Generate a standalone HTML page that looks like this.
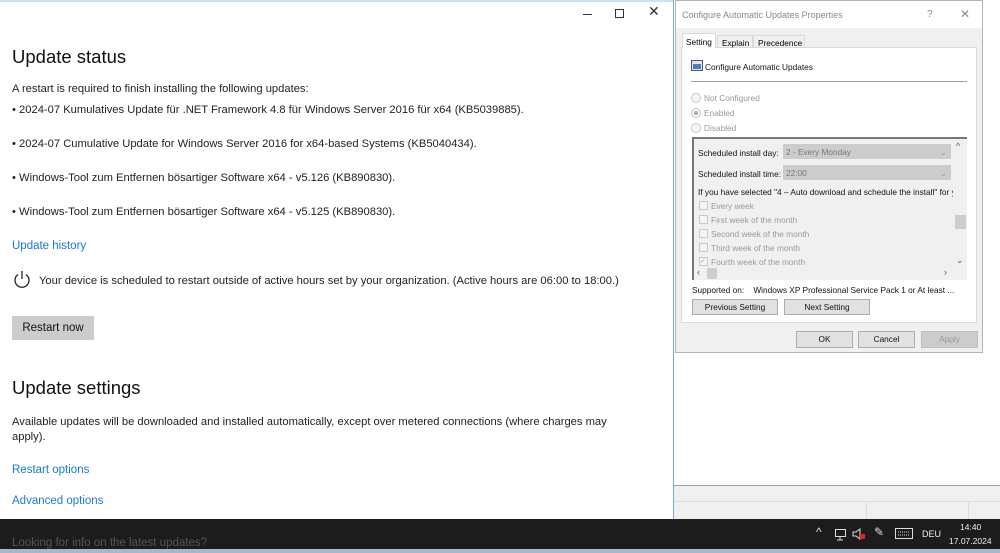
<!DOCTYPE html>
<html><head><meta charset="utf-8"><style>
*{margin:0;padding:0;box-sizing:border-box}
body{width:1000px;height:553px;overflow:hidden;background:#fff;position:relative;font-family:"Liberation Sans",sans-serif}
.a{position:absolute;white-space:nowrap}
.l{color:#222;font-size:11.2px}
.h{color:#111;font-size:18.5px;font-weight:normal}
.lk{color:#1a79d6;font-size:11.5px}
.d{font-size:8.3px;color:#111}
.g{color:#999}
.btn{position:absolute;background:#e1e1e1;border:1px solid #adadad;font-size:8.3px;text-align:center;color:#111}
.cb{position:absolute;width:9px;height:9px;border:1px solid #c8c8c8;background:#f4f4f4}
.rd{position:absolute;width:10px;height:10px;border:1px solid #c8c8c8;border-radius:50%;background:#f4f4f4}
</style></head><body>
<!-- top strip -->
<div class="a" style="left:0;top:0;width:673px;height:2px;background:#cfe0f0"></div>
<div class="a" style="left:673px;top:0;width:1px;height:519px;background:#7aa7d6"></div>
<!-- window controls -->
<div class="a" style="left:583px;top:14px;width:9px;height:1px;background:#333"></div>
<div class="a" style="left:615px;top:9px;width:9px;height:9px;border:1px solid #333"></div>
<div class="a" style="left:648px;top:3px;font-size:14px;color:#333">✕</div>

<div class="a h" style="left:12px;top:46px">Update status</div>
<div class="a l" style="left:12px;top:83px">A restart is required to finish installing the following updates:</div>
<div class="a l" style="left:12px;top:104px">• 2024-07 Kumulatives Update für .NET Framework 4.8 für Windows Server 2016 für x64 (KB5039885).</div>
<div class="a l" style="left:12px;top:138px">• 2024-07 Cumulative Update for Windows Server 2016 for x64-based Systems (KB5040434).</div>
<div class="a l" style="left:12px;top:172px">• Windows-Tool zum Entfernen bösartiger Software x64 - v5.126 (KB890830).</div>
<div class="a l" style="left:12px;top:206px">• Windows-Tool zum Entfernen bösartiger Software x64 - v5.125 (KB890830).</div>
<div class="a lk" style="left:12px;top:240px">Update history</div>
<svg class="a" style="left:12px;top:270px" width="20" height="20" viewBox="0 0 20 20"><path d="M6 4.5A7 7 0 1 0 14 4.5" fill="none" stroke="#222" stroke-width="1.3"/><path d="M10 1v8" stroke="#222" stroke-width="1.3"/></svg>
<div class="a l" style="left:39px;top:275px">Your device is scheduled to restart outside of active hours set by your organization. (Active hours are 06:00 to 18:00.)</div>
<div class="a" style="left:12px;top:316px;width:82px;height:24px;background:#ccc;font-size:11.5px;color:#111;text-align:center;line-height:24px">Restart now</div>

<div class="a h" style="left:12px;top:377px">Update settings</div>
<div class="a l" style="left:12px;top:416px">Available updates will be downloaded and installed automatically, except over metered connections (where charges may</div>
<div class="a l" style="left:12px;top:431px">apply).</div>
<div class="a lk" style="left:12px;top:464px">Restart options</div>
<div class="a lk" style="left:12px;top:495px">Advanced options</div>

<!-- dialog -->
<div class="a" style="left:675px;top:0;width:308px;height:353px;background:#f0f0f0;border:1px solid #b4b4b4">
 <div class="a" style="left:0;top:0;width:306px;height:27px;background:#fff"></div>
 <div class="a" style="left:6px;top:9px;font-size:9px;color:#888">Configure Automatic Updates Properties</div>
 <div class="a" style="left:251px;top:8px;font-size:10px;color:#888">?</div>
 <div class="a" style="left:284px;top:6px;font-size:12px;color:#888">✕</div>
 <!-- tab panel -->
 <div class="a" style="left:5px;top:46px;width:296px;height:276px;background:#fff;border:1px solid #d9d9d9"></div>
 <div class="a" style="left:6px;top:32px;width:34px;height:15px;background:#fff;border:1px solid #d9d9d9;border-bottom:none;font-size:8.3px;padding:3px 0 0 3px">Setting</div>
 <div class="a" style="left:41px;top:34px;width:36px;height:13px;border:1px solid #d9d9d9;font-size:8.3px;padding:2px 0 0 4px">Explain</div>
 <div class="a" style="left:77px;top:34px;width:52px;height:13px;border:1px solid #d9d9d9;font-size:8.3px;padding:2px 0 0 4px">Precedence</div>
 <svg class="a" style="left:15px;top:59px" width="12" height="11"><rect x="0.5" y="0.5" width="11" height="10" fill="#dde6f0" stroke="#556"/><rect x="2" y="4" width="8" height="5" fill="#4a7fc0"/></svg>
 <div class="a d" style="left:29px;top:61px">Configure Automatic Updates</div>
 <div class="a" style="left:15px;top:80px;width:276px;height:1px;background:#a0a0a0"></div>
 <div class="rd" style="left:15px;top:92px"></div><div class="a d g" style="left:28px;top:92px">Not Configured</div>
 <div class="rd" style="left:15px;top:107px"><div style="width:4px;height:4px;background:#aaa;border-radius:50%;margin:2px"></div></div><div class="a d g" style="left:28px;top:107px">Enabled</div>
 <div class="rd" style="left:15px;top:122px"></div><div class="a d g" style="left:28px;top:122px">Disabled</div>
 <!-- options box -->
 <div class="a" style="left:16px;top:136px;width:275px;height:143px;background:#f0f0f0;border-top:2px solid #777;border-left:2px solid #777">
  <div class="a d" style="left:4px;top:9px">Scheduled install day:</div>
  <div class="a" style="left:89px;top:5px;width:168px;height:15px;background:#ccc;font-size:8.3px;color:#777;padding:3px 3px">2 - Every Monday<span style="position:absolute;right:4px;color:#999">⌄</span></div>
  <div class="a d" style="left:4px;top:30px">Scheduled install time:</div>
  <div class="a" style="left:89px;top:26px;width:168px;height:15px;background:#ccc;font-size:8.3px;color:#777;padding:3px 3px">22:00<span style="position:absolute;right:4px;color:#999">⌄</span></div>
  <div class="a d" style="left:4px;top:48px;width:256px;overflow:hidden">If you have selected "4 – Auto download and schedule the install" for your</div>
  <div class="cb" style="left:5px;top:62px"></div><div class="a d g" style="left:17px;top:62px">Every week</div>
  <div class="cb" style="left:5px;top:76px"></div><div class="a d g" style="left:17px;top:76px">First week of the month</div>
  <div class="cb" style="left:5px;top:90px"></div><div class="a d g" style="left:17px;top:90px">Second week of the month</div>
  <div class="cb" style="left:5px;top:104px"></div><div class="a d g" style="left:17px;top:104px">Third week of the month</div>
  <div class="cb" style="left:5px;top:118px;font-size:7px;color:#aaa;line-height:7px">✓</div><div class="a d g" style="left:17px;top:118px">Fourth week of the month</div>
  <div class="a" style="left:259px;top:0;width:14px;height:128px;background:#f0f0f0"></div>
  <div class="a" style="left:261px;top:76px;width:11px;height:14px;background:#cdcdcd"></div>
  <div class="a" style="left:262px;top:2px;font-size:9px;color:#555">^</div>
  <div class="a" style="left:262px;top:116px;font-size:9px;color:#555">⌄</div>
  <div class="a" style="left:0;top:128px;width:259px;height:13px;background:#f0f0f0"></div>
  <div class="a" style="left:13px;top:129px;width:10px;height:11px;background:#cdcdcd"></div>
  <div class="a" style="left:3px;top:128px;font-size:9px;color:#555">‹</div>
  <div class="a" style="left:250px;top:128px;font-size:9px;color:#555">›</div>
 </div>
 <div class="a d" style="left:16px;top:284px">Supported on:&nbsp;&nbsp;&nbsp; Windows XP Professional Service Pack 1 or At least ...</div>
 <div class="btn" style="left:16px;top:298px;width:86px;height:16px;line-height:14px">Previous Setting</div>
 <div class="btn" style="left:108px;top:298px;width:86px;height:16px;line-height:14px">Next Setting</div>
 <div class="btn" style="left:120px;top:330px;width:57px;height:17px;line-height:15px">OK</div>
 <div class="btn" style="left:182px;top:330px;width:57px;height:17px;line-height:15px">Cancel</div>
 <div class="btn" style="left:245px;top:330px;width:57px;height:17px;line-height:15px;color:#999;background:#ccc;border-color:#bfbfbf">Apply</div>
</div>

<!-- gray band behind -->
<div class="a" style="left:674px;top:485px;width:326px;height:34px;background:#f0f0f0;border-top:1px solid #a0a0a0"></div>
<div class="a" style="left:674px;top:501px;width:326px;height:1px;background:#dcdcdc"></div>
<div class="a" style="left:866px;top:502px;width:1px;height:17px;background:#dcdcdc"></div>
<div class="a" style="left:968px;top:502px;width:1px;height:17px;background:#dcdcdc"></div>

<!-- taskbar -->
<div class="a" style="left:0;top:519px;width:1000px;height:31px;background:#1c1c1c"></div>
<div class="a" style="left:12px;top:537px;font-size:11.5px;color:#555">Looking for info on the latest updates?</div>
<div class="a" style="left:0;top:549px;width:1000px;height:4px;background:#a8b8c8"></div>
<div class="a" style="left:816px;top:525px;font-size:12px;color:#ddd">^</div>
<svg class="a" style="left:833px;top:527px" width="14" height="14"><rect x="2.5" y="2.5" width="10" height="7" fill="none" stroke="#ddd"/><path d="M7 10v3M4 13h6" stroke="#ddd"/></svg>
<svg class="a" style="left:852px;top:527px" width="14" height="14"><path d="M1 5h3l4-3v10l-4-3H1z" fill="none" stroke="#ddd"/><rect x="8" y="7" width="5" height="5" fill="#d22"/></svg>
<div class="a" style="left:874px;top:525px;font-size:12px;color:#ddd">✎</div>
<svg class="a" style="left:895px;top:528px" width="18" height="12"><rect x="0.5" y="0.5" width="17" height="10" fill="none" stroke="#ddd"/><path d="M3 4h12M3 7h12" stroke="#ddd" stroke-dasharray="1 1"/></svg>
<div class="a" style="left:922px;top:529px;font-size:9px;color:#eee">DEU</div>
<div class="a" style="left:960px;top:522px;font-size:8.5px;color:#eee">14:40</div>
<div class="a" style="left:949px;top:536px;font-size:8.5px;color:#eee">17.07.2024</div>
</body></html>
